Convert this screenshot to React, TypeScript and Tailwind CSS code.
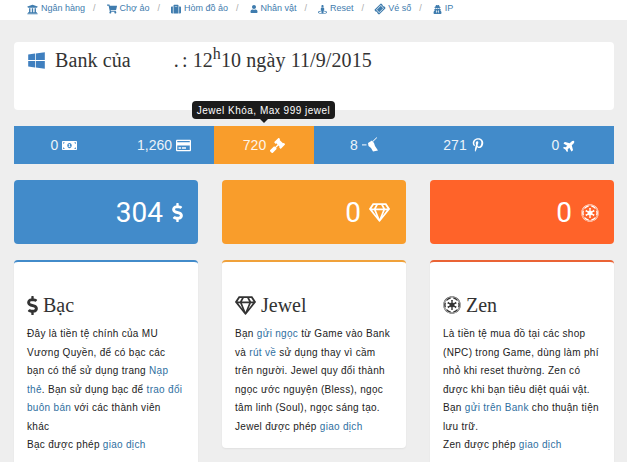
import type { ReactNode } from "react";
import {
  FaUniversity,
  FaShoppingCart,
  FaSuitcase,
  FaUser,
  FaStreetView,
  FaTicketAlt,
  FaUserSecret,
  FaWindows,
  FaMoneyBillAlt,
  FaRegCreditCard,
  FaGavel,
  FaPinterestP,
  FaPlane,
  FaDollarSign,
  FaRegGem,
  FaEmpire,
} from "react-icons/fa";

const crumbs = [
  { label: "Ngân hàng", icon: <FaUniversity size={11} /> },
  { label: "Chợ ảo", icon: <FaShoppingCart size={10} /> },
  { label: "Hòm đồ ảo", icon: <FaSuitcase size={10} /> },
  { label: "Nhân vật", icon: <FaUser size={8} /> },
  { label: "Reset", icon: <FaStreetView size={9} /> },
  { label: "Vé số", icon: <FaTicketAlt size={10} className="-rotate-45" /> },
  { label: "IP", icon: <FaUserSecret size={9} /> },
];

// no package has this one: a dash and a small slanted figure
function SkierIcon() {
  return (
    <svg viewBox="0 0 16 16" className="h-[16px] w-[16px]" fill="currentColor">
      <path d="M0 7.4h4.5v1H0z" />
      <path d="M6 6 10 3.5 12 6 13 9 16 13.5 11 14.5 9 11 6.5 9Z" />
      <path d="M10.5 4.2 14.6 0.3l.5.5-4 4Z" />
    </svg>
  );
}

const stats = [
  { value: "0", icon: <FaMoneyBillAlt size={15} />, active: false },
  { value: "1,260", icon: <FaRegCreditCard size={15} />, active: false },
  { value: "720", icon: <FaGavel size={15} />, active: true },
  { value: "8", icon: <SkierIcon />, active: false },
  { value: "271", icon: <FaPinterestP size={14} />, active: false },
  { value: "0", icon: <FaPlane size={13} className="-rotate-45" />, active: false },
];

function Link({ children }: { children: ReactNode }) {
  return <span className="text-[#2f6f9f]">{children}</span>;
}

function InfoPanel({
  border,
  icon,
  title,
  children,
  className = "",
}: {
  border: string;
  icon: ReactNode;
  title: string;
  children: ReactNode;
  className?: string;
}) {
  return (
    <div className={`rounded-sm border-t-2 bg-white px-[13px] pb-[12px] pt-[30px] shadow-[0_1px_2px_rgba(0,0,0,0.06)] ${border} ${className}`}>
      <h3 className="flex h-[26px] items-center gap-[5px] font-['Liberation_Serif',serif] text-[20px] text-[#333333]">
        {icon}
        {title}
      </h3>
      <div className="mt-[7px] text-[10px] leading-[18.5px] tracking-[0.3px] text-[#222222]">{children}</div>
    </div>
  );
}

export default function App() {
  return (
    <div className="h-[462px] w-[627px] overflow-hidden bg-[#eeeeee] font-['Liberation_Sans',Arial,sans-serif]">
      {/* breadcrumb */}
      <div className="flex h-[20px] items-center bg-white pb-[2px] pl-[27px] text-[9px] text-[#3f7cae]">
        {crumbs.map((c, i) => (
          <div key={c.label} className={`flex items-center ${i < crumbs.length - 1 ? "mr-[11px]" : ""}`}>
            <span className="mr-[3px]">{c.icon}</span>
            <span>{c.label}</span>
            {i < crumbs.length - 1 ? <span className="ml-[8px] text-[#aaaaaa]">/</span> : null}
          </div>
        ))}
      </div>

      <div className="pl-[14px] pr-[13px] pt-[22px]">
        {/* title */}
        <div className="flex h-[68px] items-start rounded-sm bg-white pl-[13px] pt-[8px]">
          <FaWindows size={19} className="mt-[1px] text-[#3f7fbf]" />
          <h1 className="ml-[9px] font-['Liberation_Serif',serif] text-[20px] leading-[20px] tracking-[0.1px] text-[#333333]">
            Bank của<span className="inline-block w-[43px]" />.<span className="inline-block w-[3px]" />: 12<sup className="text-[16px] leading-none">h</sup>10 ngày 11/9/2015
          </h1>
        </div>

        {/* stats */}
        <div className="relative mt-[16px] grid h-[38px] grid-cols-6 bg-[#428bca] text-[14px] text-white">
          {stats.map((s, i) => (
            <div key={i} className={`flex items-center justify-center gap-[4px] ${s.active ? "bg-[#f99d2b]" : ""}`}>
              <span className="opacity-90">{s.value}</span>
              {s.icon}
            </div>
          ))}
          <div className="absolute left-[178px] top-[-25px] flex h-[18px] w-[143px] items-center justify-center rounded-[4px] bg-[#1b1b1b] text-[10px] tracking-[0.5px] text-white">
            Jewel Khóa, Max 999 jewel
            <span className="absolute bottom-[-4px] left-[67px] h-0 w-0 border-x-[5px] border-t-[5px] border-x-transparent border-t-[#1b1b1b]" />
          </div>
        </div>

        {/* balances */}
        <div className="mt-[16px] grid grid-cols-3 gap-[24px] font-['Roboto',sans-serif]">
          <div className="flex h-[64px] items-center justify-end gap-[9px] rounded-sm bg-[#428bca] pr-[15px] pt-[1px] text-[28px] text-white">
            304 <FaDollarSign className="h-[19px] w-[11px]" />
          </div>
          <div className="flex h-[64px] items-center justify-end gap-[8px] rounded-sm bg-[#f99d2b] pr-[16px] pt-[1px] text-[28px] text-white">
            0 <FaRegGem size={21} />
          </div>
          <div className="flex h-[64px] items-center justify-end gap-[9px] rounded-sm bg-[#ff6329] pr-[15px] pt-[1px] text-[28px] text-white">
            0 <FaEmpire size={18} />
          </div>
        </div>

        {/* info */}
        <div className="mt-[16px] grid grid-cols-3 items-start gap-[24px]">
          <InfoPanel border="border-[#428bca]" icon={<FaDollarSign className="h-[19px] w-[11px]" />} title="Bạc" className="min-h-[210px]">
            Đây là tiền tệ chính của MU Vương Quyền, để có bạc các bạn có thể sử dụng trang <Link>Nạp thẻ</Link>. Bạn sử dụng bạc để <Link>trao đổi buôn bán</Link> với các thành viên khác
            <br />
            Bạc được phép <Link>giao dịch</Link>
          </InfoPanel>
          <InfoPanel border="border-[#f0a13a]" icon={<FaRegGem size={21} />} title="Jewel">
            Bạn <Link>gửi ngọc</Link> từ Game vào Bank và <Link>rút về</Link> sử dụng thay vì cầm trên người. Jewel quy đổi thành ngọc ước nguyện (Bless), ngọc tâm linh (Soul), ngọc sáng tạo.
            <br />
            Jewel được phép <Link>giao dịch</Link>
          </InfoPanel>
          <InfoPanel border="border-[#ea6335]" icon={<FaEmpire size={18} />} title="Zen" className="min-h-[210px]">
            Là tiền tệ mua đồ tại các shop (NPC) trong Game, dùng làm phí nhỏ khi reset thường. Zen có được khi bạn tiêu diệt quái vật. Bạn <Link>gửi trên Bank</Link> cho thuận tiện lưu trữ.
            <br />
            Zen được phép <Link>giao dịch</Link>
          </InfoPanel>
        </div>
      </div>
    </div>
  );
}
